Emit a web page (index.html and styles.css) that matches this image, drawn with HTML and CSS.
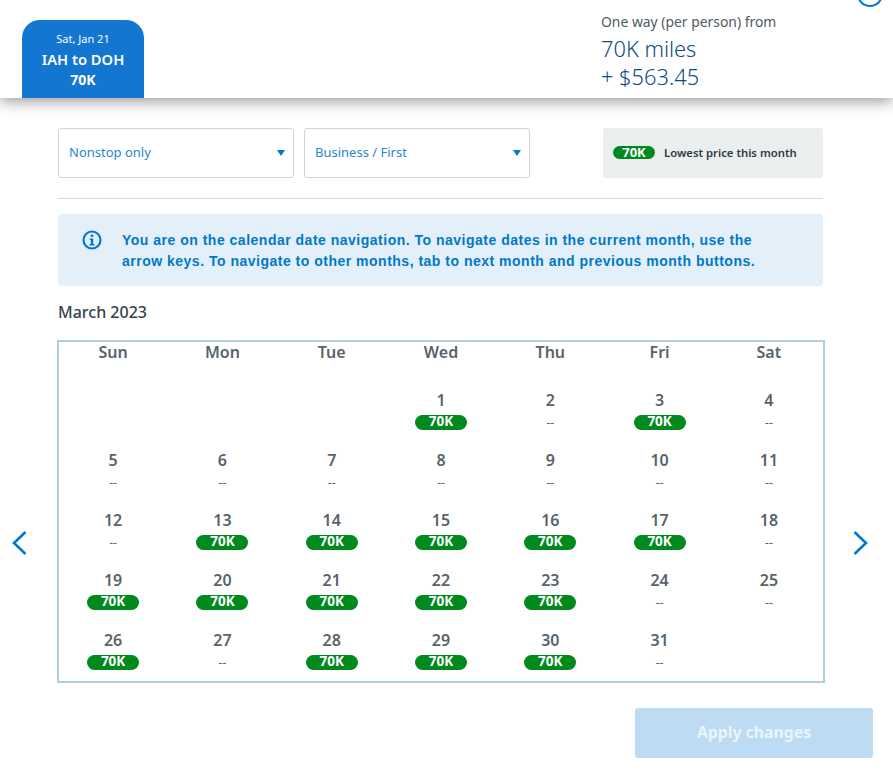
FILE: index.html
```html
<!DOCTYPE html>
<html lang="en">
<head>
    <meta charset="UTF-8">
    <meta name="viewport" content="width=device-width, initial-scale=1.0">
    <title>Choose dates</title>
    <link rel="stylesheet" href="styles.css">
</head>
<body>

    <header class="top-bar">
        <div class="trip-tab">
            <div class="trip-date">Sat, Jan 21</div>
            <div class="trip-route">IAH to DOH</div>
            <div class="trip-price">70K</div>
        </div>
        <div class="summary">
            <div class="summary-label">One way (per person) from</div>
            <div class="summary-price">70K miles</div>
            <div class="summary-price">+ $563.45</div>
        </div>
        <span class="close-circle"></span>
    </header>

    <main class="content">
        <div class="filters">
            <div class="select select-stops">
                <span>Nonstop only</span>
                <span class="caret"></span>
            </div>
            <div class="select select-cabin">
                <span>Business / First</span>
                <span class="caret"></span>
            </div>
            <div class="legend">
                <span class="pill legend-pill">70K</span>
                <span>Lowest price this month</span>
            </div>
        </div>

        <div class="info-box">
            <svg class="info-icon" width="20" height="20" viewBox="0 0 20 20">
                <circle cx="10" cy="10" r="8.5" fill="none" stroke="#0078d2" stroke-width="2.2"/>
                <circle cx="10" cy="5.8" r="1.4" fill="#0078d2"/>
                <path d="M7.7 8.4h3.5v5.5h1.2v1.5H7.6v-1.5h1.2V9.9H7.7z" fill="#0078d2"/>
            </svg>
            <p>You are on the calendar date navigation. To navigate dates in the current month, use the arrow keys. To navigate to other months, tab to next month and previous month buttons.</p>
        </div>

        <h2 class="month-title">March 2023</h2>
    </main>

    <div class="calendar-row">
        <div class="nav-arrow">
            <svg width="16" height="24" viewBox="0 0 16 24"><path d="M14.5 1 3 12l11.5 11" fill="none" stroke="#0078d2" stroke-width="2.6"/></svg>
        </div>
        <div class="calendar">
            <div class="dow">Sun</div>
            <div class="dow">Mon</div>
            <div class="dow">Tue</div>
            <div class="dow">Wed</div>
            <div class="dow">Thu</div>
            <div class="dow">Fri</div>
            <div class="dow">Sat</div>

            <div class="day"></div>
            <div class="day"></div>
            <div class="day"></div>
            <div class="day"><b>1</b><span class="pill">70K</span></div>
            <div class="day"><b>2</b><span class="none">--</span></div>
            <div class="day"><b>3</b><span class="pill">70K</span></div>
            <div class="day"><b>4</b><span class="none">--</span></div>

            <div class="day"><b>5</b><span class="none">--</span></div>
            <div class="day"><b>6</b><span class="none">--</span></div>
            <div class="day"><b>7</b><span class="none">--</span></div>
            <div class="day"><b>8</b><span class="none">--</span></div>
            <div class="day"><b>9</b><span class="none">--</span></div>
            <div class="day"><b>10</b><span class="none">--</span></div>
            <div class="day"><b>11</b><span class="none">--</span></div>

            <div class="day"><b>12</b><span class="none">--</span></div>
            <div class="day"><b>13</b><span class="pill">70K</span></div>
            <div class="day"><b>14</b><span class="pill">70K</span></div>
            <div class="day"><b>15</b><span class="pill">70K</span></div>
            <div class="day"><b>16</b><span class="pill">70K</span></div>
            <div class="day"><b>17</b><span class="pill">70K</span></div>
            <div class="day"><b>18</b><span class="none">--</span></div>

            <div class="day"><b>19</b><span class="pill">70K</span></div>
            <div class="day"><b>20</b><span class="pill">70K</span></div>
            <div class="day"><b>21</b><span class="pill">70K</span></div>
            <div class="day"><b>22</b><span class="pill">70K</span></div>
            <div class="day"><b>23</b><span class="pill">70K</span></div>
            <div class="day"><b>24</b><span class="none">--</span></div>
            <div class="day"><b>25</b><span class="none">--</span></div>

            <div class="day"><b>26</b><span class="pill">70K</span></div>
            <div class="day"><b>27</b><span class="none">--</span></div>
            <div class="day"><b>28</b><span class="pill">70K</span></div>
            <div class="day"><b>29</b><span class="pill">70K</span></div>
            <div class="day"><b>30</b><span class="pill">70K</span></div>
            <div class="day"><b>31</b><span class="none">--</span></div>
            <div class="day"></div>
        </div>
        <div class="nav-arrow">
            <svg width="16" height="24" viewBox="0 0 16 24"><path d="M1.5 1 13 12 1.5 23" fill="none" stroke="#0078d2" stroke-width="2.6"/></svg>
        </div>
    </div>

    <div class="actions">
        <button type="button" class="apply-btn">Apply changes</button>
    </div>

</body>
</html>
```

FILE: styles.css
```css
body {
    font-family: "Noto Sans", "Open Sans", sans-serif;
    margin: 0;
    background-color: #fff;
    color: #36495a;
    overflow: hidden;
}
.top-bar {
    position: relative;
    display: flex;
    align-items: flex-end;
    justify-content: space-between;
    height: 98px;
    padding-left: 22px;
    background-color: #fff;
    box-shadow: 0 3px 14px rgba(0,0,0,0.42);
}
.trip-tab {
    width: 122px;
    height: 78px;
    box-sizing: border-box;
    padding-top: 10px;
    text-align: center;
    color: #fff;
    background-color: #1376d0;
    border-radius: 18px 18px 0 0;
}
.trip-date {
    font-size: 11px;
    line-height: 18px;
}
.trip-route {
    font-size: 14.7px;
    font-weight: 600;
    line-height: 22px;
}
.trip-price {
    margin-top: 1px;
    font-size: 14px;
    font-weight: 700;
    line-height: 18px;
}
.summary {
    width: 292px;
    height: 98px;
    box-sizing: border-box;
    padding-top: 12px;
}
.summary-label {
    margin-bottom: 4px;
    font-size: 13.9px;
    line-height: 19px;
    color: #4f5a63;
}
.summary-price {
    font-size: 21.8px;
    font-weight: 300;
    line-height: 28px;
    color: #0f4c81;
}
.close-circle {
    position: absolute;
    right: 10px;
    top: -19px;
    width: 22px;
    height: 22px;
    border: 2px solid #0078d2;
    border-radius: 50%;
}
.content {
    padding: 30px 70px 0 58px;
}
.filters {
    display: flex;
    height: 50px;
    padding-bottom: 20px;
    border-bottom: 1px solid #d6d9dc;
}
.select {
    display: flex;
    align-items: center;
    justify-content: space-between;
    box-sizing: border-box;
    height: 50px;
    padding: 0 8px 2px 10px;
    font-size: 13px;
    color: #2b85cf;
    background-color: #fff;
    border: 1px solid #d0d4d8;
    border-radius: 3px;
}
.select-stops {
    width: 236px;
    margin-right: 10px;
}
.select-cabin {
    width: 226px;
    margin-right: 73px;
}
.caret {
    width: 0;
    height: 0;
    margin-top: 2px;
    border-left: 4px solid transparent;
    border-right: 4px solid transparent;
    border-top: 6px solid #0078d2;
}
.legend {
    display: flex;
    align-items: center;
    width: 220px;
    box-sizing: border-box;
    padding: 0 0 1px 10px;
    font-size: 11.3px;
    font-weight: 600;
    color: #2d3a44;
    background-color: #ebeeef;
    border-radius: 3px;
}
.pill {
    display: block;
    width: 52px;
    height: 15px;
    font-size: 13.5px;
    font-weight: 700;
    line-height: 13px;
    text-align: center;
    color: #fff;
    background-color: #008a1e;
    border-radius: 8px;
}
.legend-pill {
    width: 42px;
    height: 13px;
    margin-right: 9px;
    font-size: 13px;
    line-height: 12px;
}
.info-box {
    display: flex;
    height: 72px;
    box-sizing: border-box;
    margin-top: 15px;
    padding: 16px 24px 15px;
    background-color: #e3f0fa;
    border-radius: 4px;
}
.info-icon {
    flex-shrink: 0;
    margin-right: 20px;
}
.info-box p {
    width: 640px;
    margin: 0;
    font-family: "Liberation Sans", Arial, sans-serif;
    font-size: 14px;
    font-weight: 700;
    letter-spacing: 0.5px;
    line-height: 21px;
    color: #0078c8;
}
.month-title {
    margin: 15px 0 0;
    font-size: 16px;
    font-weight: 500;
    line-height: 22px;
    color: #36424c;
}
.calendar-row {
    display: flex;
    margin-top: 17px;
}
.nav-arrow {
    display: flex;
    justify-content: flex-start;
    width: 57px;
    box-sizing: border-box;
    padding: 191px 0 0 11px;
}
.nav-arrow:last-child {
    width: 68px;
    padding-left: 28px;
}
.calendar {
    display: grid;
    grid-template-columns: repeat(7, 109.3px);
    grid-template-rows: 30px repeat(5, 60px);
    justify-content: center;
    width: 768px;
    height: 343px;
    box-sizing: border-box;
    border: 2px solid #b3cde0;
}
.dow {
    font-size: 16px;
    font-weight: 600;
    line-height: 21px;
    text-align: center;
    color: #59636b;
}
.day {
    display: flex;
    flex-direction: column;
    align-items: center;
    padding-top: 18px;
    color: #59636b;
}
.day b {
    font-size: 16px;
    font-weight: 600;
    line-height: 20px;
}
.day .pill {
    margin-top: 5px;
}
.day .none {
    margin-top: 5px;
    font-size: 12px;
    line-height: 15px;
}
.actions {
    display: flex;
    justify-content: flex-end;
    padding: 25px 20px 0 0;
}
.apply-btn {
    width: 238px;
    height: 50px;
    padding: 0 0 2px;
    font-family: inherit;
    font-size: 15.8px;
    font-weight: 700;
    color: #eaf4fb;
    background-color: #bddbf2;
    border: none;
    border-radius: 3px;
}
```
